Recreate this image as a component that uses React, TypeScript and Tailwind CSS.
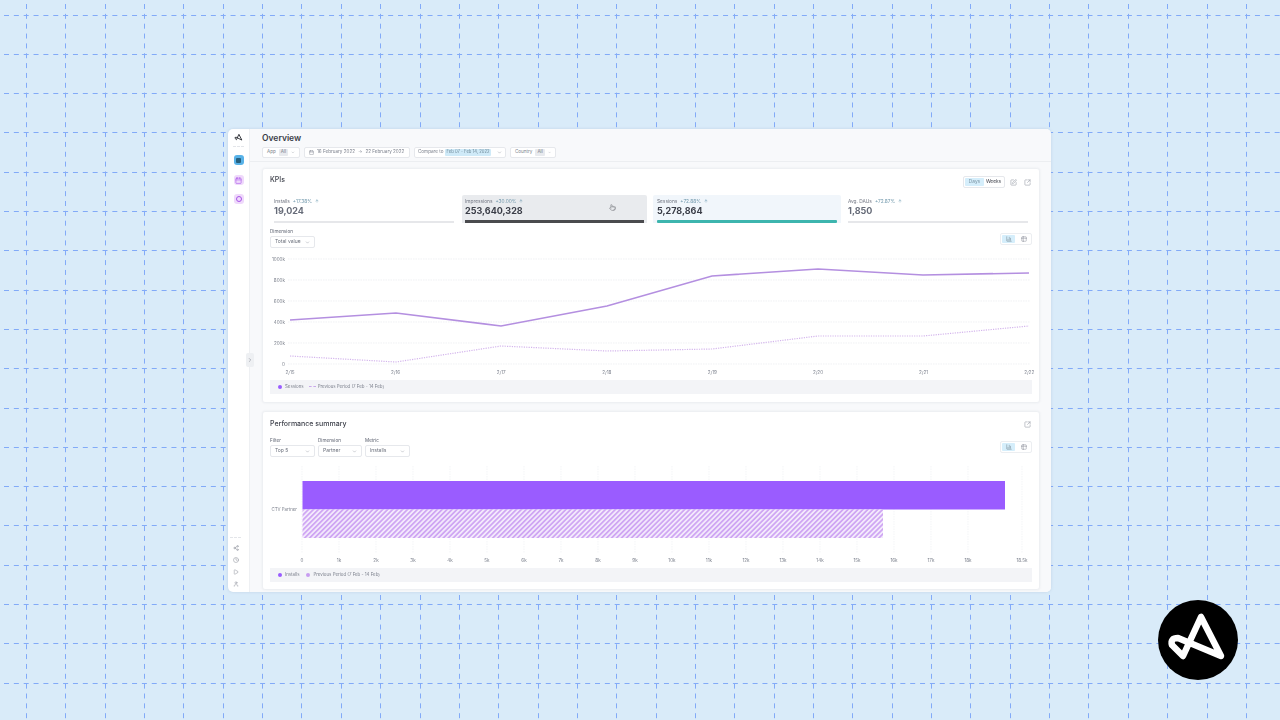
import { ChevronDown, ChevronRight, Calendar, SquarePen, SquareArrowOutUpRight, BarChart3, Table2, Share2, Clock, Play, User, ArrowUp, Pointer } from "lucide-react"

const gridXs = Array.from({ length: 33 }, (_, i) => Math.floor(26.5 + i * 39.35) + 0.5)
const gridYs = Array.from({ length: 18 }, (_, i) => Math.floor(15 + i * 39.3) + 0.5)

const kpis = [
  { label: "Installs", delta: "+17.38%", value: "19,024", tab: "ml-[4px] w-[180px] bg-white", inset: "", bar: "h-[2px] bg-[#e6e7ea]", text: "text-[#666b78]" },
  { label: "Impressions", delta: "+30.00%", value: "253,640,328", tab: "ml-[8px] w-[185px] bg-[#e9ebee]", inset: "px-[3px]", bar: "h-[2.5px] bg-[#4a4b4e]", text: "text-[#3a3d47]" },
  { label: "Sessions", delta: "+72.88%", value: "5,278,864", tab: "ml-[6px] w-[188px] bg-[#f1f6fb]", inset: "px-[4px]", bar: "h-[2.5px] rounded-[1px] bg-[#3db5ae]", text: "text-[#3a3d47]" },
  { label: "Avg. DAUs", delta: "+72.87%", value: "1,850", tab: "ml-[7px] w-[180px] bg-white", inset: "", bar: "h-[2px] bg-[#e6e7ea]", text: "text-[#666b78]" },
]

const mainLine = "290,320 396,313 501,326 607,306 712,276 818,269 923,275 1029,273"
const prevLine = "290,356 396,362 501,346 607,351 712,349 818,336 923,336 1029,326"

function Logo({ className, color }: { className: string; color: string }) {
  return (
    <svg viewBox="0 0 80 80" className={className} fill="none">
      <path d="M63 56 L43 17 L25 56 L14 45 Q12 38 20 38 Z" stroke={color} strokeWidth="6.5" strokeLinejoin="round" strokeLinecap="round" />
    </svg>
  )
}

function Pill({ label, chip, w }: { label: string; chip: string; w: string }) {
  return (
    <div className={`${w} h-[11px] flex items-center gap-[3px] px-[4px] rounded-[2px] border border-[#e6e8ec] bg-white text-[4.6px] text-[#7a7f8b]`}>
      <span>{label}</span>
      <span className="px-[2px] rounded-[1px] bg-[#e8eaee]">{chip}</span>
      <ChevronDown className="ml-auto w-[5px] h-[5px] text-[#8a8f99]" />
    </div>
  )
}

function Select({ label, value, w }: { label: string; value: string; w: string }) {
  return (
    <div className="flex flex-col gap-[1px]">
      <span className="h-[7px] leading-[7px] text-[4.6px] text-[#5d6270]">{label}</span>
      <div className={`${w} h-[12px] flex items-center justify-between px-[4px] rounded-[2px] border border-[#e6e8ec] text-[5px] text-[#6a6f7b]`}>
        <span>{value}</span>
        <ChevronDown className="w-[5px] h-[5px] text-[#8a8f99]" />
      </div>
    </div>
  )
}

function ViewToggle({ className }: { className: string }) {
  return (
    <div className={`${className} w-[32px] h-[12px] flex items-center gap-[2px] p-[1px] rounded-[2px] border border-[#eceef1]`}>
      <div className="flex-1 h-full flex items-center justify-center rounded-[1px] bg-[#d5eefb]">
        <BarChart3 className="w-[6px] h-[6px] text-[#71808c]" />
      </div>
      <div className="flex-1 h-full flex items-center justify-center">
        <Table2 className="w-[6px] h-[6px] text-[#8a8f99]" />
      </div>
    </div>
  )
}

function Legend({ children }: { children: React.ReactNode }) {
  return (
    <div className="w-[762px] h-[14px] flex items-center gap-[5px] px-[8px] bg-[#f3f4f7] text-[4.4px] text-[#7a7f8b]">
      {children}
    </div>
  )
}

function LineChart() {
  const ys = [
    ["1000k", 259],
    ["800k", 280],
    ["600k", 301],
    ["400k", 322],
    ["200k", 343],
    ["0", 364],
  ] as const
  const xs = ["2/15", "2/16", "2/17", "2/18", "2/19", "2/20", "2/21", "2/22"]
  return (
    <svg viewBox="270 253 762 125" className="w-[762px] h-[125px] overflow-visible">
      {ys.map(([label, y]) => (
        <g key={label}>
          <line x1="288" x2="1030" y1={y} y2={y} stroke="#e6e8ec" strokeWidth="0.6" strokeDasharray="1.5 1" />
          <text x="285" y={y + 1.7} textAnchor="end" fontSize="4.6" fill="#7a7f8b">{label}</text>
        </g>
      ))}
      {xs.map((label, i) => (
        <text key={label} x={290 + i * 105.6} y="374" textAnchor="middle" fontSize="4.6" fill="#7a7f8b">{label}</text>
      ))}
      <polyline points={mainLine} fill="none" stroke="#b48fe0" strokeWidth="1.6" />
      <polyline points={prevLine} fill="none" stroke="#d3b4ec" strokeWidth="1.2" strokeDasharray="1.2 1.2" />
    </svg>
  )
}

function BarChart() {
  const labels = Array.from({ length: 19 }, (_, i) => (i === 0 ? "0" : `${i}k`))
  return (
    <svg viewBox="270 462 762 105" className="w-[762px] h-[105px]">
      <defs>
        <pattern id="hatch" width="3.5" height="3.5" patternUnits="userSpaceOnUse" patternTransform="rotate(45)">
          <rect width="3.5" height="3.5" fill="#f3e9fc" />
          <rect width="1.75" height="3.5" fill="#cfa6f3" />
        </pattern>
      </defs>
      {labels.map((label, i) => (
        <g key={label}>
          <line x1={302 + i * 37} x2={302 + i * 37} y1="466" y2="553" stroke="#eceef1" strokeWidth="0.6" strokeDasharray="1.5 1" />
          <text x={302 + i * 37} y="562" textAnchor="middle" fontSize="4.6" fill="#7a7f8b">{label}</text>
        </g>
      ))}
      <line x1="1022" x2="1022" y1="466" y2="553" stroke="#eceef1" strokeWidth="0.6" strokeDasharray="1.5 1" />
      <text x="1022" y="562" textAnchor="middle" fontSize="4.6" fill="#7a7f8b">18.5k</text>
      <rect x="302.5" y="481" width="702.5" height="28.5" fill="#9a5cff" />
      <rect x="302.5" y="509.5" width="580.5" height="28.5" fill="url(#hatch)" />
      <text x="297" y="511" textAnchor="end" fontSize="4.4" fill="#7a7f8b">CTV Partner</text>
    </svg>
  )
}

export default function App() {
  return (
    <div className="relative w-[1280px] h-[720px] overflow-hidden bg-[#d9ebf9] font-['Inter',sans-serif] pl-[228px] pt-[129px]">
      <svg className="absolute inset-0 w-[1280px] h-[720px]">
        {gridXs.map((x) => (
          <line key={x} x1={x} x2={x} y1="4" y2="720" stroke="#82aaf8" strokeWidth="1" strokeDasharray="5 4.85" />
        ))}
        {gridYs.map((y) => (
          <line key={y} x1="4" x2="1280" y1={y} y2={y} stroke="#82aaf8" strokeWidth="1" strokeDasharray="5 4.85" />
        ))}
      </svg>

      {/* app window */}
      <div className="relative w-[823px] h-[463px] flex overflow-hidden rounded-[5px] bg-white shadow-[0_0_3px_rgba(120,140,170,0.25)] blur-[0.45px]">
        <aside className="w-[22px] flex flex-col items-center pt-[3px] pb-[5px] border-r border-[#eef0f3]">
          <Logo className="w-[11px] h-[11px]" color="#23252b" />
          <div className="w-[11px] mt-[3px] border-t border-dashed border-[#e3e5e9]" />
          <div className="mt-[8px] w-[10px] h-[10px] rounded-[3px] bg-[#58b2e8] flex items-center justify-center">
            <div className="w-[5px] h-[5px] rounded-[1px] bg-[#26607f]" />
          </div>
          <div className="mt-[10px] w-[10px] h-[10px] rounded-[3px] bg-[#efd9fb] flex items-center justify-center">
            <Calendar className="w-[7px] h-[7px] text-[#a855e8]" />
          </div>
          <div className="mt-[9px] w-[10px] h-[10px] rounded-[3px] bg-[#efd9fb] flex items-center justify-center">
            <div className="w-[6px] h-[6px] rounded-full border border-[#a855e8]" />
          </div>
          <div className="mt-auto w-[11px] border-t border-dashed border-[#e3e5e9] -translate-x-[3px]" />
          <div className="flex flex-col gap-[6px] mt-[7px] -translate-x-[3px] text-[#8a8f99]">
            <Share2 className="w-[6px] h-[6px]" />
            <Clock className="w-[6px] h-[6px]" />
            <Play className="w-[6px] h-[6px]" />
            <User className="w-[6px] h-[6px]" />
          </div>
        </aside>

        <main className="flex-1 flex flex-col bg-[#f8f9fb]">
          <header className="h-[33px] shrink-0 px-[12px] pt-[3px] border-b border-[#eceef1]">
            <h1 className="h-[13px] leading-[13px] text-[8.5px] font-semibold text-[#3a3d47]">Overview</h1>
            <div className="flex gap-[4px] mt-[2px]">
              <Pill label="App" chip="All" w="w-[38px]" />
              <div className="w-[106px] h-[11px] flex items-center gap-[3px] px-[4px] rounded-[2px] border border-[#e6e8ec] bg-white text-[4.6px] text-[#7a7f8b]">
                <Calendar className="w-[5px] h-[5px]" />
                <span>16 February 2022</span>
                <span>→</span>
                <span>22 February 2022</span>
              </div>
              <div className="w-[92px] h-[11px] flex items-center gap-[2px] px-[3px] rounded-[2px] border border-[#e6e8ec] bg-white text-[4.6px] text-[#7a7f8b] whitespace-nowrap">
                <span>Compare to</span>
                <span className="px-[1px] rounded-[1px] bg-[#cfeaf8] text-[#6f8a99] text-[4.2px]">Feb 07 - Feb 14, 2022</span>
                <ChevronDown className="ml-auto w-[5px] h-[5px] shrink-0 text-[#8a8f99]" />
              </div>
              <Pill label="Country" chip="All" w="w-[46px]" />
            </div>
          </header>

          <div className="flex flex-col gap-[8px] pl-[12px] pt-[6px]">
            {/* KPIs card */}
            <section className="w-[778px] h-[235px] shrink-0 rounded-[3px] border border-[#eef0f3] bg-white pl-[7px] shadow-[0_0_2px_rgba(120,130,150,0.12)]">
              <div className="h-[26px] flex items-center justify-between pr-[8px]">
                <h2 className="mb-[3px] text-[7px] font-medium text-[#3f424c]">KPIs</h2>
                <div className="flex items-center gap-[5px] text-[#9a9ea8]">
                  <div className="w-[42px] h-[12px] flex items-center p-[1px] rounded-[2px] border border-[#e6e8ec] text-[4.8px]">
                    <span className="flex-1 h-full flex items-center justify-center rounded-[1px] bg-[#d5eefb] text-[#7a93a3]">Days</span>
                    <span className="flex-1 text-center text-[#3f424c]">Weeks</span>
                  </div>
                  <SquarePen className="w-[7px] h-[7px]" />
                  <SquareArrowOutUpRight className="ml-[2px] w-[7px] h-[7px]" />
                </div>
              </div>
              <div className="flex h-[28px]">
                {kpis.map((k) => (
                  <div key={k.label} className={`${k.tab} ${k.inset} flex flex-col pt-[3px] pb-[0.5px] rounded-t-[2px]`}>
                    <div className="flex items-center gap-[3px] text-[4.8px] leading-[6px] text-[#6f7480]">
                      <span>{k.label}</span>
                      <span className="text-[#6f97ab]">{k.delta}</span>
                      <ArrowUp className="w-[4px] h-[4px] text-[#3d7c9a]" />
                    </div>
                    <div className={`mt-[1px] text-[9px] leading-[12px] font-bold ${k.text}`}>{k.value}</div>
                    <div className={`mt-auto ${k.bar}`} />
                  </div>
                ))}
              </div>
              <div className="flex items-end justify-between mt-[5px] pr-[7px]">
                <Select label="Dimension" value="Total value" w="w-[45px]" />
                <ViewToggle className="mb-[3px]" />
              </div>
              <div className="mt-[5px]">
                <LineChart />
              </div>
              <div className="mt-[2px]">
                <Legend>
                  <span className="flex items-center gap-[3px]">
                    <span className="w-[4px] h-[4px] rounded-full bg-[#9a5cff]" />
                    Sessions
                  </span>
                  <span className="flex items-center gap-[2px]">
                    <span className="w-[7px] border-t border-dashed border-[#c9a9ea]" />
                    Previous Period (7 Feb - 14 Feb)
                  </span>
                </Legend>
              </div>
            </section>

            {/* Performance summary card */}
            <section className="w-[778px] h-[179px] shrink-0 rounded-[3px] border border-[#eef0f3] bg-white pl-[7px] shadow-[0_0_2px_rgba(120,130,150,0.12)]">
              <div className="h-[25px] flex items-center justify-between pr-[8px]">
                <h2 className="text-[7px] font-medium text-[#3f424c]">Performance summary</h2>
                <SquareArrowOutUpRight className="w-[7px] h-[7px] text-[#9a9ea8]" />
              </div>
              <div className="flex items-end justify-between pr-[7px]">
                <div className="flex gap-[3px]">
                  <Select label="Filter" value="Top 5" w="w-[45px]" />
                  <Select label="Dimension" value="Partner" w="w-[44px]" />
                  <Select label="Metric" value="Installs" w="w-[45px]" />
                </div>
                <ViewToggle className="mb-[4px]" />
              </div>
              <div className="mt-[5px]">
                <BarChart />
              </div>
              <div className="mt-[1px]">
                <Legend>
                  <span className="flex items-center gap-[3px]">
                    <span className="w-[4px] h-[4px] rounded-full bg-[#9a5cff]" />
                    Installs
                  </span>
                  <span className="flex items-center gap-[3px] ml-[2px]">
                    <span className="w-[4px] h-[4px] rounded-full bg-[#c89cf0]" />
                    Previous Period (7 Feb - 14 Feb)
                  </span>
                </Legend>
              </div>
            </section>
          </div>
        </main>

        {/* sidebar collapse handle */}
        <div className="absolute left-[18px] top-[224px] w-[8px] h-[14px] flex items-center justify-center rounded-[2px] bg-[#eef0f3]">
          <ChevronRight className="w-[6px] h-[6px] text-[#7a7f8b]" />
        </div>

        {/* mouse cursor */}
        <Pointer className="absolute left-[381px] top-[75px] w-[7px] h-[7px] text-[#85878c]" />
      </div>

      {/* brand badge */}
      <div className="absolute left-[1158px] top-[600px] w-[80px] h-[80px] rounded-full bg-black">
        <Logo className="w-[80px] h-[80px]" color="#ffffff" />
      </div>
    </div>
  )
}
